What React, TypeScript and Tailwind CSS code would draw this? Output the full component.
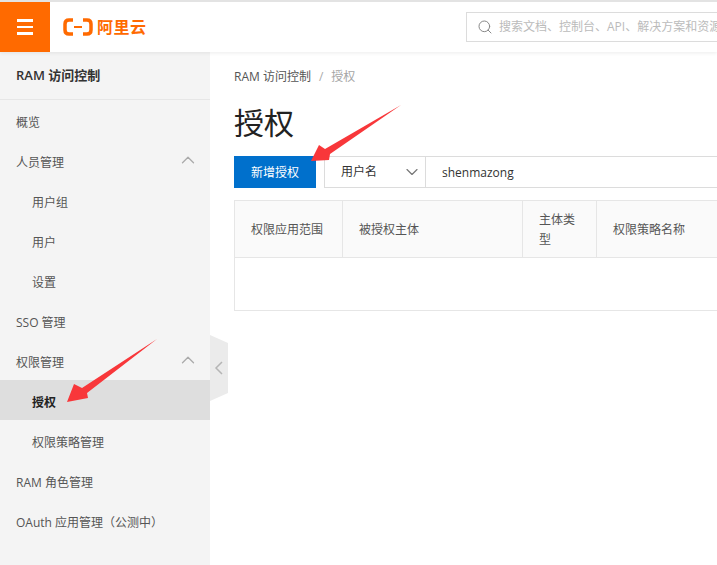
import React from 'react';
import { ChevronDown, ChevronUp, Search } from 'lucide-react';

const NavRow = ({ label, sub, active, open }: { label: string; sub?: boolean; active?: boolean; open?: boolean }) => (
  <div className={`h-10 flex items-center justify-between pt-[6px] pr-[11px] text-xs ${sub ? 'pl-8' : 'pl-4'} ${active ? 'bg-[#dedede] text-[#222] font-bold' : 'text-[#555]'}`}>
    <span>{label}</span>
    {open && <ChevronUp size={22} strokeWidth={1.4} className="text-[#aaa] -mt-[6px]" />}
  </div>
);

const Arrow = ({ className, size, points }: { className: string; size: string; points: string }) => (
  <svg className={className} viewBox={size} fill="#f8373a">
    <polygon points={points} />
  </svg>
);

export default function App() {
  return (
    <div className="relative w-[717px] h-[565px] overflow-hidden bg-white flex flex-col font-['Open_Sans','Noto_Sans_CJK_SC',sans-serif]">
      <header className="h-[52px] shrink-0 flex border-t-2 border-[#e3e3e3] bg-white shadow-[0_1px_4px_rgba(0,0,0,0.08)] relative z-10">
        <div className="w-[50px] shrink-0 bg-[#ff6a00] flex flex-col items-center justify-center gap-[4px]">
          <span className="block w-4 h-[2.5px] bg-white" />
          <span className="block w-4 h-[2.5px] bg-white" />
          <span className="block w-4 h-[2.5px] bg-white" />
        </div>
        <div className="ml-[13px] w-[403px] shrink-0 flex items-center gap-[4px] whitespace-nowrap">
          <svg width="30" height="18" viewBox="0 0 30 18" fill="none" stroke="#ff6a00" strokeWidth="3.500" className="shrink-0">
            <path d="M10 2H6Q2 2 2 6V12Q2 16 6 16H10" />
            <path d="M20 2H24Q28 2 28 6V12Q28 16 24 16H20" />
            <path d="M11 9H19" strokeWidth="2" />
          </svg>
          <span className="text-[#ff6a00] text-[16px] font-bold tracking-[0.5px] leading-none">阿里云</span>
        </div>
        <div className="mt-[10px] w-[300px] h-[30px] shrink-0 border border-[#dcdcdc] flex items-center pl-[10px] text-xs text-[#bbb] whitespace-nowrap overflow-hidden">
          <Search size={16} strokeWidth={1.5} className="text-[#888] shrink-0 mr-[6px]" />
          <span>搜索文档、控制台、API、解决方案和资源</span>
        </div>
      </header>

      <div className="flex flex-1 min-h-0">
        <aside className="w-[210px] shrink-0 bg-[#f4f4f4]">
          <div className="h-12 flex items-center pt-px pl-4 text-[13px] font-semibold text-[#333] border-b border-[#e6e6e6]">RAM 访问控制</div>
          <NavRow label="概览" />
          <NavRow label="人员管理" open />
          <NavRow label="用户组" sub />
          <NavRow label="用户" sub />
          <NavRow label="设置" sub />
          <NavRow label="SSO 管理" />
          <NavRow label="权限管理" open />
          <NavRow label="授权" sub active />
          <NavRow label="权限策略管理" sub />
          <NavRow label="RAM 角色管理" />
          <NavRow label="OAuth 应用管理（公测中）" />
        </aside>

        <main className="flex-1 min-w-0 pl-6 overflow-hidden">
          <div className="h-12 flex items-center pt-[2px] text-xs text-[#555] whitespace-nowrap">
            <span>RAM 访问控制</span>
            <span className="mx-2 text-[#aaa]">/</span>
            <span className="text-[#a5a5a5]">授权</span>
          </div>
          <h1 className="mt-[3px] text-[30px] leading-[40px] text-[#222]">授权</h1>
          <div className="mt-[13px] flex w-[600px] h-8">
            <button className="w-[82px] pt-px bg-[#0070cc] text-white text-xs">新增授权</button>
            <div className="ml-2 w-[102px] border border-[#dcdcdc] flex items-center justify-between pl-4 pr-[3px] text-xs text-[#333]">
              <span>用户名</span>
              <ChevronDown size={20} strokeWidth={1.4} className="text-[#777]" />
            </div>
            <div className="flex-1 pt-px border border-l-0 border-[#dcdcdc] flex items-center pl-4 text-xs text-[#333]">shenmazong</div>
          </div>
          <table className="mt-3 w-[700px] table-fixed border-collapse text-xs text-[#555]">
            <thead>
              <tr className="h-[57px] bg-[#fafafa]">
                <th className="w-[108px] border border-[#e6e6e6] px-4 pt-[2px] font-normal text-left">权限应用范围</th>
                <th className="w-[180px] border border-[#e6e6e6] px-4 pt-[2px] font-normal text-left">被授权主体</th>
                <th className="w-[74px] border border-[#e6e6e6] px-4 pt-[2px] font-normal text-left leading-5">主体类型</th>
                <th className="border border-[#e6e6e6] px-4 pt-[2px] font-normal text-left">权限策略名称</th>
              </tr>
            </thead>
            <tbody>
              <tr className="h-[53px]">
                <td colSpan={4} className="border border-[#e6e6e6]" />
              </tr>
            </tbody>
          </table>
        </main>
      </div>

      {/* 侧边栏收起把手 */}
      <div className="absolute left-[210px] top-[335px]">
        <svg width="18" height="66" viewBox="0 0 18 66">
          <polygon points="0,0 18,8 18,58 0,66" fill="#ebebeb" />
          <path d="M12 27 L6 33 L12 39" fill="none" stroke="#b5b5b5" strokeWidth="1.500" />
        </svg>
      </div>

      {/* 标注箭头 */}
      <Arrow className="absolute left-[60px] top-[335px] w-[102px] h-[70px]" size="0 0 102 70" points="7,67 14,49 22,53 97,4 27,58 28,63" />
      <Arrow className="absolute left-[308px] top-[104px] w-[96px] h-[60px]" size="0 0 96 60" points="3,57 11,41 17,45 93,1 22,50 21,56" />
    </div>
  );
}
